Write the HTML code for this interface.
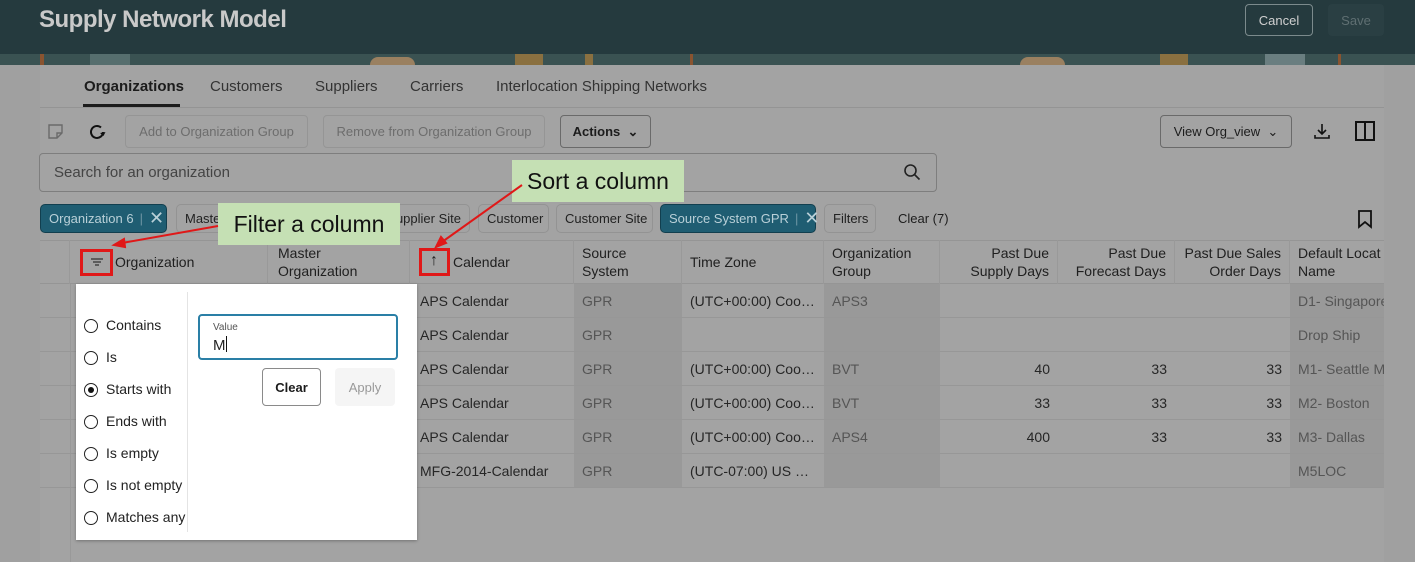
<!DOCTYPE html>
<html><head><meta charset="utf-8"><style>
*{box-sizing:border-box;margin:0;padding:0}
body{width:1415px;height:562px;overflow:hidden;background:#a0a0a0;font-family:"Liberation Sans",sans-serif;color:#1c1c1c;position:relative;font-size:14px}
.a{position:absolute;white-space:nowrap}
.hdr{left:0;top:0;width:1415px;height:54px;background:#253a3e}
.strip{left:0;top:54px;width:1415px;height:11px;background:#3a5252;overflow:hidden}
.btn{border:1px solid #8a8a8a;border-radius:4px;display:flex;align-items:center;justify-content:center;font-size:13px}
.chip{border:1px solid #939393;border-radius:5px;height:29px;top:204px;display:flex;align-items:center;padding:0 8px;font-size:13px;color:#222}
.chipd{background:#1f5d72;border-color:#123f4f;color:#b9d0d8}
.th{top:240px;height:44px;display:flex;align-items:center;font-size:14px;line-height:18px;color:#1f1f1f;padding:0 8px;border-right:1px solid #999}
.r{text-align:right;justify-content:flex-end}
.td{height:34px;display:flex;align-items:center;padding:0 8px;font-size:14px;color:#262626;border-bottom:1px solid #979797}
.dk{background:#999}
.gr{color:#555}
.call{background:#c5e0b4;font-size:23px;color:#111;display:flex;align-items:center;justify-content:center}
.rad{width:14px;height:14px;border:1.5px solid #222;border-radius:50%;display:inline-block;vertical-align:middle;margin-right:8px;position:relative}
.opt{left:84px;font-size:14px;color:#222}
</style></head><body>
<div class="a hdr"></div>
<div class="a" style="left:39px;top:6px;font-size:24px;font-weight:bold;color:#c9c9c9;letter-spacing:-0.5px">Supply Network Model</div>
<div class="a btn" style="left:1245px;top:4px;width:68px;height:32px;color:#d0d0d0;border-color:#7c8a8c;background:#253a3e">Cancel</div>
<div class="a btn" style="left:1328px;top:4px;width:56px;height:32px;color:#5f6f72;border:none;background:#2a3f43">Save</div>
<div class="a strip">
<div class="a" style="left:40px;top:0;width:4px;height:11px;background:#8a5430"></div>
<div class="a" style="left:90px;top:0;width:40px;height:11px;background:#566e6e"></div>
<div class="a" style="left:370px;top:3px;width:45px;height:8px;background:#9a8060;border-radius:10px 10px 0 0"></div>
<div class="a" style="left:515px;top:0;width:28px;height:11px;background:#8a7040"></div>
<div class="a" style="left:585px;top:0;width:8px;height:11px;background:#8a7040"></div>
<div class="a" style="left:690px;top:0;width:3px;height:11px;background:#8a5430"></div>
<div class="a" style="left:1020px;top:3px;width:45px;height:8px;background:#9a8060;border-radius:10px 10px 0 0"></div>
<div class="a" style="left:1160px;top:0;width:28px;height:11px;background:#8a7040"></div>
<div class="a" style="left:1265px;top:0;width:40px;height:11px;background:#6a7e80"></div>
<div class="a" style="left:1338px;top:0;width:3px;height:11px;background:#8a5430"></div>
</div>
<div class="a" style="left:40px;top:65px;width:1344px;height:497px;background:#a3a3a3"></div>
<div class="a" style="left:84px;top:78px;font-size:15px;font-weight:bold;color:#1c1c1c">Organizations</div>
<div class="a" style="left:83px;top:104px;width:97px;height:3px;background:#1c1c1c"></div>
<div class="a" style="left:210px;top:78px;font-size:15px;color:#333">Customers</div>
<div class="a" style="left:315px;top:78px;font-size:15px;color:#333">Suppliers</div>
<div class="a" style="left:410px;top:78px;font-size:15px;color:#333">Carriers</div>
<div class="a" style="left:496px;top:78px;font-size:15px;color:#333">Interlocation Shipping Networks</div>
<div class="a" style="left:40px;top:107px;width:1344px;height:1px;background:#949494"></div>
<svg class="a" style="left:47px;top:123px" width="18" height="18" viewBox="0 0 18 18"><path d="M2 2h13v8l-5 5H2z M10 15v-5h5" fill="none" stroke="#6a6a6a" stroke-width="1.4"/></svg>
<svg class="a" style="left:88px;top:122px" width="20" height="20" viewBox="0 0 20 20"><path d="M15 10a6 6 0 1 1-2-4.5" fill="none" stroke="#111" stroke-width="2"/><path d="M12 11l3.5 3 2-4z" fill="#111"/></svg>
<div class="a btn" style="left:125px;top:115px;width:183px;height:33px;color:#6d6d6d;border-color:#959595">Add to Organization Group</div>
<div class="a btn" style="left:323px;top:115px;width:222px;height:33px;color:#6d6d6d;border-color:#959595">Remove from Organization Group</div>
<div class="a btn" style="left:560px;top:115px;width:91px;height:33px;color:#1c1c1c;border-color:#6a6a6a;font-weight:bold">Actions&nbsp;&nbsp;⌄</div>
<div class="a btn" style="left:1160px;top:115px;width:132px;height:33px;color:#1c1c1c;border-color:#6a6a6a">View Org_view&nbsp;&nbsp;⌄</div>
<svg class="a" style="left:1312px;top:121px" width="20" height="20" viewBox="0 0 20 20"><path d="M10 3v10M6 9l4 4 4-4M3 14v3h14v-3" fill="none" stroke="#111" stroke-width="1.6"/></svg>
<svg class="a" style="left:1354px;top:120px" width="22" height="22" viewBox="0 0 22 22"><rect x="2" y="2" width="18" height="18" fill="none" stroke="#111" stroke-width="2"/><path d="M11 2v18" stroke="#111" stroke-width="2"/></svg>
<div class="a" style="left:39px;top:153px;width:898px;height:39px;border:1px solid #7e7e7e;border-radius:4px"></div>
<div class="a" style="left:54px;top:164px;font-size:15px;color:#444">Search for an organization</div>
<svg class="a" style="left:903px;top:163px" width="18" height="18" viewBox="0 0 18 18"><circle cx="7.5" cy="7.5" r="5.5" fill="none" stroke="#222" stroke-width="1.6"/><path d="M11.5 11.5l5 5" stroke="#222" stroke-width="1.6"/></svg>
<div class="a chip chipd" style="left:40px;width:127px">Organization 6 <span style="margin:0 6px;color:#6d95a3">|</span><span style="font-size:18px">✕</span></div>
<div class="a chip" style="left:176px;width:50px">Maste</div>
<div class="a chip" style="left:388px;width:82px;justify-content:flex-end">upplier Site</div>
<div class="a chip" style="left:478px;width:71px">Customer</div>
<div class="a chip" style="left:556px;width:97px">Customer Site</div>
<div class="a chip chipd" style="left:660px;width:156px">Source System GPR <span style="margin:0 6px;color:#6d95a3">|</span><span style="font-size:18px">✕</span></div>
<div class="a chip" style="left:824px;width:52px">Filters</div>
<div class="a" style="left:898px;top:211px;font-size:13px;color:#1c1c1c">Clear (7)</div>
<svg class="a" style="left:1356px;top:209px" width="18" height="20" viewBox="0 0 18 20"><path d="M3 2h12v16l-6-5-6 5z" fill="none" stroke="#111" stroke-width="1.8"/></svg>
<div class="a" style="left:40px;top:240px;width:1344px;height:44px;border-top:1px solid #959595;border-bottom:1px solid #959595"></div>
<div class="a th" style="left:40px;width:30px"></div>
<div class="a th" style="left:70px;width:198px;padding-left:45px">Organization</div>
<div class="a th" style="left:268px;width:142px;padding-left:10px">Master<br>Organization</div>
<div class="a th" style="left:410px;width:164px;padding-left:43px">Calendar</div>
<div class="a th" style="left:574px;width:108px">Source<br>System</div>
<div class="a th" style="left:682px;width:142px">Time Zone</div>
<div class="a th" style="left:824px;width:116px">Organization<br>Group</div>
<div class="a th r" style="left:940px;width:118px;text-align:right">Past Due<br>Supply Days</div>
<div class="a th r" style="left:1058px;width:117px;text-align:right">Past Due<br>Forecast Days</div>
<div class="a th r" style="left:1175px;width:115px;text-align:right">Past Due Sales<br>Order Days</div>
<div class="a th" style="left:1290px;width:94px;overflow:hidden;border:none">Default Locat<br>Name</div>
<div class="a" style="left:70px;top:284px;width:1px;height:278px;background:#999"></div>
<div class="a" style="left:40px;top:284px;width:1344px">
<div style="position:absolute;left:534px;top:0;width:108px;height:204px" class="dk"></div>
<div style="position:absolute;left:784px;top:0;width:116px;height:204px" class="dk"></div>
<div style="position:absolute;left:1250px;top:0;width:94px;height:204px" class="dk"></div>
</div>
<div class="a" style="left:40px;top:284px;width:1344px">
<div style="display:grid;grid-template-columns:372px 162px 108px 142px 116px 118px 117px 115px 94px">
<div class="td"></div><div class="td">APS Calendar</div><div class="td gr">GPR</div><div class="td">(UTC+00:00) Coo…</div><div class="td gr">APS3</div><div class="td r"></div><div class="td r"></div><div class="td r"></div><div class="td gr" style="overflow:hidden">D1- Singapore</div>
<div class="td"></div><div class="td">APS Calendar</div><div class="td gr">GPR</div><div class="td"></div><div class="td gr"></div><div class="td r"></div><div class="td r"></div><div class="td r"></div><div class="td gr">Drop Ship</div>
<div class="td"></div><div class="td">APS Calendar</div><div class="td gr">GPR</div><div class="td">(UTC+00:00) Coo…</div><div class="td gr">BVT</div><div class="td r">40</div><div class="td r">33</div><div class="td r">33</div><div class="td gr" style="overflow:hidden">M1- Seattle M</div>
<div class="td"></div><div class="td">APS Calendar</div><div class="td gr">GPR</div><div class="td">(UTC+00:00) Coo…</div><div class="td gr">BVT</div><div class="td r">33</div><div class="td r">33</div><div class="td r">33</div><div class="td gr">M2- Boston</div>
<div class="td"></div><div class="td">APS Calendar</div><div class="td gr">GPR</div><div class="td">(UTC+00:00) Coo…</div><div class="td gr">APS4</div><div class="td r">400</div><div class="td r">33</div><div class="td r">33</div><div class="td gr">M3- Dallas</div>
<div class="td"></div><div class="td">MFG-2014-Calendar</div><div class="td gr">GPR</div><div class="td">(UTC-07:00) US …</div><div class="td gr"></div><div class="td r"></div><div class="td r"></div><div class="td r"></div><div class="td gr">M5LOC</div>
</div></div>
<div class="a" style="left:76px;top:284px;width:341px;height:256px;background:#fff;box-shadow:0 1px 3px rgba(0,0,0,.3)"></div>
<div class="a" style="left:187px;top:292px;width:1px;height:240px;background:#e4e4e4"></div>
<div class="a opt" style="top:317px"><span class="rad"></span>Contains</div>
<div class="a opt" style="top:349px"><span class="rad"></span>Is</div>
<div class="a opt" style="top:381px"><span class="rad"><span style="position:absolute;left:2.5px;top:2.5px;width:6px;height:6px;border-radius:50%;background:#111"></span></span>Starts with</div>
<div class="a opt" style="top:413px"><span class="rad"></span>Ends with</div>
<div class="a opt" style="top:445px"><span class="rad"></span>Is empty</div>
<div class="a opt" style="top:477px"><span class="rad"></span>Is not empty</div>
<div class="a opt" style="top:509px"><span class="rad"></span>Matches any</div>
<div class="a" style="left:198px;top:314px;width:200px;height:46px;border:2px solid #2a7fa6;border-radius:4px"></div>
<div class="a" style="left:213px;top:322px;font-size:10px;color:#555">Value</div>
<div class="a" style="left:213px;top:336px;font-size:15px;color:#222">M<span style="display:inline-block;width:1px;height:16px;background:#111;vertical-align:-2px"></span></div>
<div class="a btn" style="left:262px;top:368px;width:59px;height:38px;font-weight:bold;color:#1c1c1c;border-color:#8a8a8a">Clear</div>
<div class="a btn" style="left:335px;top:368px;width:60px;height:38px;color:#999;background:#f5f5f5;border:none">Apply</div>
<div class="a call" style="left:512px;top:160px;width:172px;height:42px">Sort a column</div>
<div class="a call" style="left:218px;top:203px;width:182px;height:42px">Filter a column</div>
<div class="a" style="left:80px;top:249px;width:33px;height:27px;border:3px solid #e01818"></div>
<div class="a" style="left:419px;top:248px;width:31px;height:28px;border:3px solid #e01818"></div>
<svg class="a" style="left:87px;top:253px" width="20" height="18" viewBox="0 0 20 18"><path d="M4 6h12M6 9h8M8 12h4" stroke="#333" stroke-width="1.3"/></svg>
<div class="a" style="left:430px;top:252px;font-size:16px;color:#222">↑</div>
<svg class="a" style="left:0;top:0;pointer-events:none" width="1415" height="562"><g stroke="#e01818" stroke-width="2" fill="#e01818">
<line x1="218" y1="226" x2="122" y2="243"/><path d="M114 245l10-6 1 8z"/>
<line x1="522" y1="185" x2="442" y2="242"/><path d="M436 247l5-10 5 6z"/></g></svg>
</body></html>
